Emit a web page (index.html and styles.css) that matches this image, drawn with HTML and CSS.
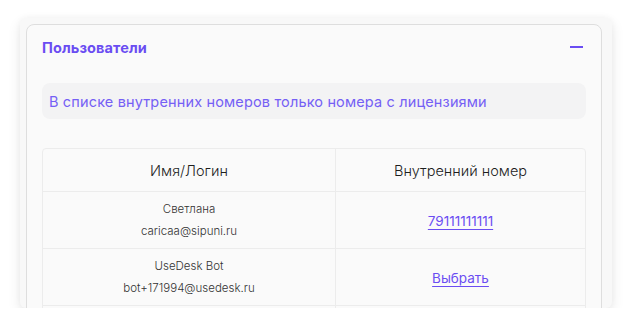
FILE: index.html
```html
<!DOCTYPE html>
<html lang="ru">
<head>
<meta charset="utf-8">
<link rel="stylesheet" href="styles.css">
</head>
<body>
<div class="panel">
  <div class="card">
    <div class="card-head">
      <span class="title">Пользователи</span>
      <span class="collapse"></span>
    </div>
    <div class="note">В списке внутренних номеров только номера с лицензиями</div>
    <table class="users">
      <thead>
        <tr><th class="c1">Имя/Логин</th><th class="c2">Внутренний номер</th></tr>
      </thead>
      <tbody>
        <tr>
          <td class="c1"><div class="name">Светлана</div><div class="login">caricaa@sipuni.ru</div></td>
          <td class="c2"><a class="link" href="#">79111111111</a></td>
        </tr>
        <tr>
          <td class="c1"><div class="name">UseDesk Bot</div><div class="login">bot+171994@usedesk.ru</div></td>
          <td class="c2"><a class="link" href="#">Выбрать</a></td>
        </tr>
        <tr>
          <td class="c1"><div class="name">&nbsp;</div><div class="login">&nbsp;</div></td>
          <td class="c2"></td>
        </tr>
      </tbody>
    </table>
  </div>
</div>
</body>
</html>
```

FILE: styles.css
```css
html, body {
  margin: 0;
  padding: 0;
  background: #ffffff;
}
body {
  font-family: Inter, "Noto Sans", sans-serif;
  color: #222;
}
.panel {
  box-sizing: border-box;
  margin: 18px 0 0 20px;
  width: 592px;
  height: 290px;
  padding: 6px 10px 0 6px;
  background: #f8f8f8;
  border-radius: 6px;
  overflow: hidden;
  box-shadow: 0 5px 14px rgba(0, 0, 0, 0.09), 0 0 6px rgba(0, 0, 0, 0.04);
}
.card {
  box-sizing: border-box;
  width: 576px;
  min-height: 320px;
  background: #fafafa;
  border: 1px solid #dedede;
  border-radius: 8px;
  padding: 0 15px;
}
.card-head {
  height: 44px;
  display: flex;
  align-items: center;
  justify-content: space-between;
}
.title {
  font-size: 14.5px;
  font-weight: 700;
  color: #6a4df2;
  letter-spacing: 0.1px;
}
.collapse {
  width: 13px;
  height: 2px;
  background: #6a4df2;
  margin-right: 3px;
}
.note {
  margin-top: 14px;
  height: 36px;
  box-sizing: border-box;
  display: flex;
  align-items: center;
  padding-left: 7px;
  background: #f3f3f4;
  border-radius: 8px;
  font-size: 14.5px;
  font-weight: 400;
  letter-spacing: 0.15px;
  color: #7560f5;
}
.users {
  margin-top: 29px;
  width: 544px;
  border-collapse: separate;
  border-spacing: 0;
  border: 1px solid #ececec;
  border-radius: 4px;
  background: #fafafa;
}
.users th, .users td {
  text-align: center;
  padding: 0;
  border-bottom: 1px solid #ececec;
}
.users .c1 {
  width: 292px;
  border-right: 1px solid #ececec;
}
.users th {
  height: 42px;
  font-size: 14.5px;
  font-weight: 300;
  color: #1e1e1e;
}
.users td {
  height: 56px;
}
.name, .login {
  font-size: 11.5px;
  line-height: 22px;
  font-weight: 300;
  color: #333;
}
.link {
  font-size: 13.5px;
  color: #6a4df2;
  text-decoration: underline;
  text-underline-offset: 3px;
}
```
